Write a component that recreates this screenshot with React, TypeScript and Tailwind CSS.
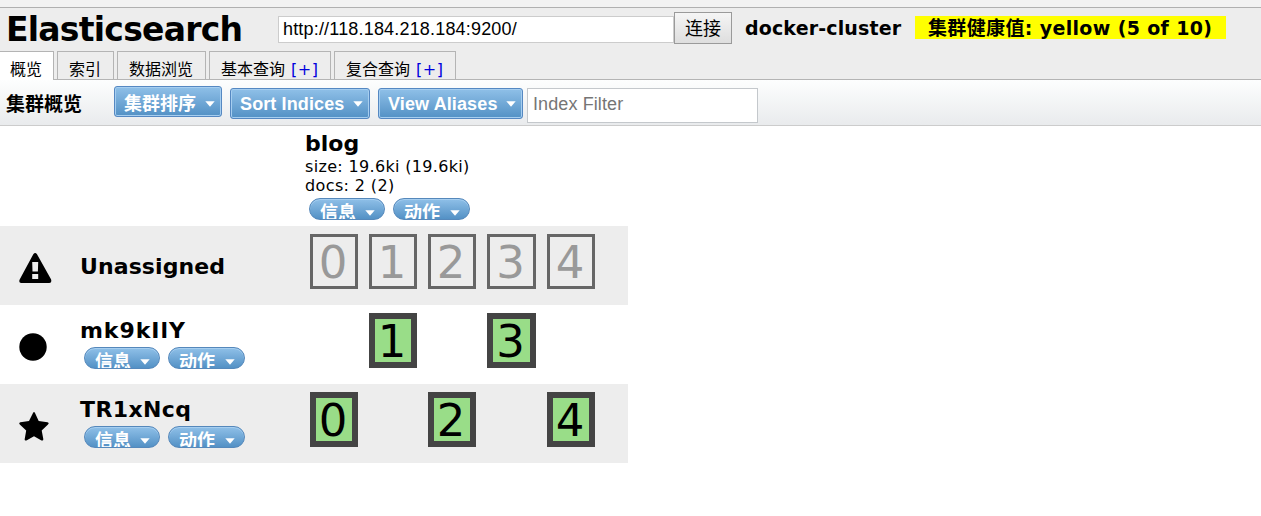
import type { ReactNode } from "react";

const sans = "font-['DejaVu_Sans','Noto_Sans_CJK_SC',sans-serif]";
const arial = "font-['Liberation_Sans','Noto_Sans_CJK_SC',sans-serif]";

function Caret({ className = "" }: { className?: string }) {
  return (
    <svg width="10" height="6" viewBox="0 0 10 6" className={`shrink-0 ${className}`}>
      <path d="M0.3 0.3H9.7L5 5.7Z" fill="#fff" />
    </svg>
  );
}

function MenuButton({ children, className }: { children: ReactNode; className: string }) {
  return (
    <button
      className={`flex items-center justify-between rounded-[3px] border border-[#5588c2] bg-linear-to-b from-[#8fc0e8] to-[#5391c5] pr-[6px] pl-[9px] text-[18px] leading-[20px] font-bold whitespace-nowrap text-white shadow-[inset_0_0_0_1px_#a6cef0] ${arial} ${className}`}
    >
      <span>{children}</span>
      <Caret className="mt-px" />
    </button>
  );
}

function Pill({ children, className }: { children: string; className: string }) {
  return (
    <button
      className={`flex h-[22px] justify-between overflow-hidden rounded-[11px] border border-[#5588bb] bg-linear-to-b from-[#8fc0e8] to-[#5391c5] pr-[9px] pl-[10px] text-[18px] leading-[29px] font-bold text-white shadow-[inset_0_1px_0_#a6cef0] ${arial} ${className}`}
    >
      <span>{children}</span>
      <Caret className="mt-[11px]" />
    </button>
  );
}

function Pills() {
  return (
    <div className="flex gap-2 pl-1">
      <Pill className="w-[76px]">信息</Pill>
      <Pill className="w-[77px]">动作</Pill>
    </div>
  );
}

function Shard({ n, active }: { n: number; active: boolean }) {
  return (
    <div
      className={`flex h-[55px] justify-center pr-[2px] text-[45px] ${n === 3 ? "w-[49px]" : "w-[48px]"} ${
        active
          ? "border-6 border-[#444] bg-[#99dd88] leading-[46px] text-black"
          : "border-3 border-[#666] leading-[51px] text-[#999]"
      }`}
    >
      <span>{n}</span>
    </div>
  );
}

function Row({
  icon,
  name,
  nameSpacing,
  shards,
  assigned,
  shaded,
}: {
  icon: ReactNode;
  name: string;
  nameSpacing: string;
  shards: number[];
  assigned: boolean;
  shaded: boolean;
}) {
  return (
    <div className={`flex h-[79px] w-[628px] ${shaded ? "bg-[#ededed]" : "bg-white"}`}>
      <div className="flex w-[80px] items-center pt-[5px] pl-[19px]">{icon}</div>
      <div className={`w-[230px] ${assigned ? "pt-[13px]" : "pt-[28px]"}`}>
        <div className={`text-[22px] leading-[26px] font-bold ${nameSpacing} ${assigned ? "mb-[3px]" : ""}`}>
          {name}
        </div>
        {assigned && <Pills />}
      </div>
      <div className="grid grid-cols-[59px_59px_59px_60px_48px] pt-2">
        {[0, 1, 2, 3, 4].map((n) => (
          <div key={n}>{shards.includes(n) && <Shard n={n} active={assigned} />}</div>
        ))}
      </div>
    </div>
  );
}

function Tab({ label, plus, className }: { label: string; plus?: boolean; className: string }) {
  return (
    <div
      className={`flex h-[28px] border-t border-r border-[#b4b4b4] pt-[6px] text-[16px] leading-[24px] whitespace-nowrap ${className}`}
    >
      <span>{label}</span>
      {plus && <span className="ml-[6px] tracking-[0.5px] text-[#0000dd]">[+]</span>}
    </div>
  );
}

function WarningIcon() {
  return (
    <svg width="33" height="30" viewBox="0 0 33 30">
      <path
        fillRule="evenodd"
        d="M14.3 1.3Q16.2-1.2 18 1.3L32 26.3Q33.2 29.8 30.3 30H2.1Q-.7 29.8 .8 26.3ZM13.2 9L13.5 18.6H18.9L19.2 9ZM13.2 21V26H19.2V21Z"
      />
    </svg>
  );
}

function StarIcon() {
  return (
    <svg width="30" height="29" viewBox="0 0 30 29">
      <path d="M14 1Q15 -.8 16 1L19.7 9 28.5 10.2Q30.6 10.8 29 12.4L22.7 18.4 24.3 27.1Q24.4 29.2 22.5 28.4L15 24.2 7.4 28.4Q5.4 29.2 5.7 27.1L7.2 18.4 .8 12.4Q-.6 10.8 1.4 10.2L10 9Z" />
    </svg>
  );
}

export default function App() {
  return (
    <div className={`h-[516px] w-[1261px] overflow-hidden bg-white text-black ${sans}`}>
      <div className="h-[7px] bg-[#f2f2f2]" />
      <header className="h-[72px] border-t border-[#b0b0b0] bg-[#ededed]">
        <div className="flex h-[43px] items-start">
          <h1 className="w-[278px] pl-[6px] text-[33px] leading-[44px] font-bold tracking-[-0.75px] whitespace-nowrap">
            Elasticsearch
          </h1>
          <input
            className={`mt-[8px] h-[27px] w-[396px] border border-[#ccc] bg-white px-[4px] text-[18px] tracking-[0.18px] ${arial}`}
            defaultValue="http://118.184.218.184:9200/"
          />
          <button
            className={`mt-[4px] h-[32px] w-[58px] border border-[#9a9a9a] bg-linear-to-b from-[#f5f5f5] to-[#dedede] text-[18px] leading-[32px] ${arial}`}
          >
            连接
          </button>
          <div className="mt-[8px] w-[183px] pl-[13px] text-[19px] leading-[24px] font-bold tracking-[0.15px] whitespace-nowrap">
            docker-cluster
          </div>
          <div className="mt-[8px] h-[23px] w-[311px] bg-[#ffff00] pl-[13px] text-[19px] leading-[24px] font-bold tracking-[0.35px] whitespace-nowrap">
            集群健康值: yellow (5 of 10)
          </div>
        </div>
        <nav className="flex gap-[3px]">
          <Tab label="概览" className="h-[29px] w-[54px] bg-white pl-[10px]" />
          <Tab label="索引" className="w-[57px] border-l pl-[11px]" />
          <Tab label="数据浏览" className="w-[89px] border-l pl-[11px]" />
          <Tab label="基本查询" plus className="w-[122px] border-l pl-[11px]" />
          <Tab label="复合查询" plus className="w-[122px] border-l pl-[11px]" />
        </nav>
      </header>
      <div className="flex h-[47px] border-y border-t-[#b4b4b4] border-b-[#ccc] bg-linear-to-b from-[#fdfefe] to-[#e9ebed]">
        <h2 className="w-[114px] pt-[11px] pl-[6px] text-[19px] leading-[26px] font-bold">集群概览</h2>
        <MenuButton className="mt-[6px] h-[31px] w-[108px] pt-[4px]">集群排序</MenuButton>
        <MenuButton className="mt-[8px] ml-[8px] h-[31px] w-[140px] tracking-[0.12px]">Sort Indices</MenuButton>
        <MenuButton className="mt-[8px] ml-[8px] h-[31px] w-[145px] tracking-[0.12px]">View Aliases</MenuButton>
        <input
          className={`mt-[8px] ml-[4px] h-[35px] w-[231px] border border-[#c4c8cc] bg-white px-[5px] pb-[3px] text-[18px] tracking-[0.1px] placeholder:text-[#757575] ${arial}`}
          placeholder="Index Filter"
        />
      </div>
      <main>
        <div className="h-[100px] pt-[4px] pl-[305px]">
          <div className="text-[22px] leading-[27px] font-bold">blog</div>
          <div className="text-[16px] leading-[19px] tracking-[0.33px]">size: 19.6ki (19.6ki)</div>
          <div className="mb-[3px] text-[16px] leading-[19px] tracking-[0.38px]">docs: 2 (2)</div>
          <Pills />
        </div>
        <Row
          icon={<WarningIcon />}
          name="Unassigned"
          nameSpacing="tracking-[0.1px]"
          shards={[0, 1, 2, 3, 4]}
          assigned={false}
          shaded
        />
        <Row
          icon={
            <svg width="28" height="28" viewBox="0 0 28 28">
              <circle cx="14" cy="14" r="13.7" />
            </svg>
          }
          name="mk9kIlY"
          nameSpacing="tracking-[0.95px]"
          shards={[1, 3]}
          assigned
          shaded={false}
        />
        <Row
          icon={<StarIcon />}
          name="TR1xNcq"
          nameSpacing="tracking-[0.4px]"
          shards={[0, 2, 4]}
          assigned
          shaded
        />
      </main>
    </div>
  );
}
